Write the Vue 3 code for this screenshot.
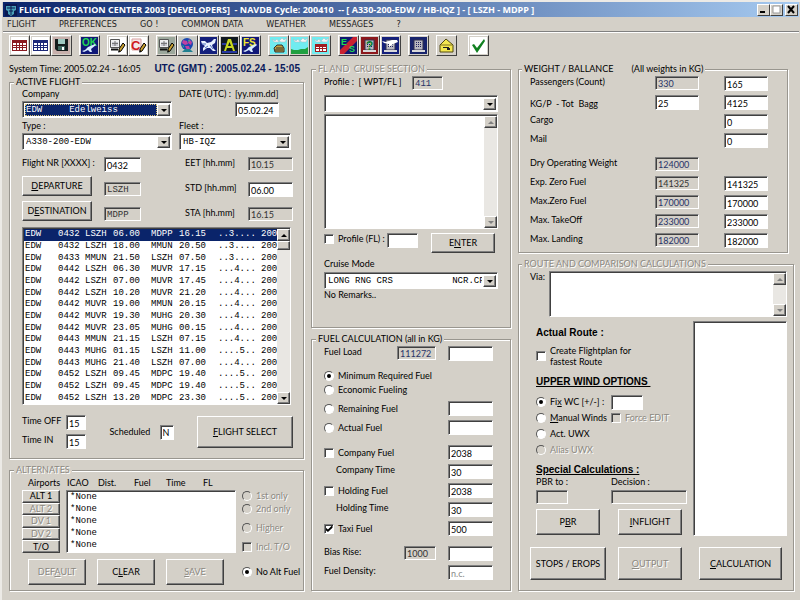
<script setup>
import { reactive } from 'vue'

const menus = ['FLIGHT', 'PREFERENCES', 'GO !', 'COMMON DATA', 'WEATHER', 'MESSAGES', '?']

const table = (c) => `<rect width="17" height="17" fill="#fff"/><rect x="1" y="3" width="15" height="11" fill="${c}"/><path d="M2 6h3v2H2zM6 6h2v2H6zM9 6h2v2H9zM12 6h3v2h-3zM2 9h3v1H2zM6 9h2v1H6zM9 9h2v1H9zM12 9h3v1h-3zM2 11h3v2H2zM6 11h2v2H6zM9 11h2v2H9zM12 11h3v2h-3z" fill="#fff"/>`
const pencil = '<path d="M14 6l2 2-4 6-2 1 0-3z" fill="#c8a030" stroke="#000" stroke-width="1"/><path d="M9 16l1-3 1 1z" fill="#000"/>'
const page = '<path d="M1.500 2.500h9v8h-9z" fill="#f0f0f0" stroke="#555"/><path d="M3 5h6v4H3z" fill="#c8c8d0"/><path d="M6 4v5M3 6.500h6" stroke="#777"/><path d="M2 12.500h7" stroke="#111" stroke-width="2"/>'
const tower = '<path d="M4 3h9v10H4z" fill="#b8b8c0" stroke="#303050"/><path d="M6 5h1v1H6zM8 5h1v1H8zM10 5h1v1h-1zM6 7h1v1H6zM8 7h1v1H8zM10 7h1v1h-1zM6 9h1v1H6zM8 9h1v1H8zM10 9h1v1h-1z" fill="#202060"/><path d="M2 13h13v2H2z" fill="#d8d8d8"/>'
const plane = '<path d="M1 14l3-1 3-3 7-3 1 1-5 4 1 3-2 0-2-2-4 2z" fill="#d8ecff"/>'
const clouds = '<path d="M2 2l3 2 2-2 2 3H4zM9 4l3-3 2 2 3-2-2 4h-4z" fill="#f4f4f4" stroke="#a8b8c0" stroke-width=".5"/>'
const lettering = (t, x, y, s, c) => `<text x="${x}" y="${y}" font-family="Liberation Sans, sans-serif" font-weight="bold" font-size="${s}" fill="${c}">${t}</text>`
const fill = (c) => `<rect width="17" height="17" fill="${c}"/>`

const toolGroups = [
  [
    { name: 'Red table', art: table('#8a1a20') },
    { name: 'Blue table', art: table('#1c2878') },
    { name: 'Save', art: fill('#c8b0ac') + '<path d="M2 2h13v12H4l-2-2z" fill="#141c1c"/><path d="M5 2h7v5H5z" fill="#9fc8c0"/><path d="M5 9h7v4H5z" fill="#406860"/><path d="M9 10h2v3H9z" fill="#fff"/>' },
  ],
  [{ name: 'OK', art: fill('#101878') + lettering('OK', 1, 9, 10, '#20d850') + plane }],
  [
    { name: 'Edit page', art: fill('#fff') + page + pencil },
    { name: 'Edit company', art: fill('#fff') + '<path d="M2 2h9v11H2z" fill="#f4e8e8" stroke="#d8a0a0"/>' + lettering('C', 1, 13, 13, '#d01820') + pencil },
  ],
  [
    { name: 'Edit flight', art: fill('#9ca89c') + page + pencil },
    { name: 'World', art: fill('#c4c8c4') + '<circle cx="8" cy="7" r="6" fill="#1848b0"/><path d="M4 3l4 1 1 3-3 1-3-2zM10 2l3 3-1 3-3-2zM6 9l4 0 1 3-3 1z" fill="#c040a0"/><path d="M3 8l2 1 0 2zM9 3l2 0-1 2z" fill="#30c080"/><path d="M3 15l3-3h5l3 3z" fill="#208090"/>' },
    { name: 'Aircraft', art: fill('#14207c') + '<path d="M1 4h4l2 2 4-1 3-3 2 0-1 4-3 2 1 3 3 3h-3l-3-3-3 0-4 3 0-3 2-2-3-2z" fill="#e8f0ff"/><path d="M2 7h4M10 8l3 4M5 11l3-2" stroke="#5070c0" fill="none"/>' },
    { name: 'Airports', art: fill('#101820') + '<path d="M3 14L7 2h3l4 12h-2l-1-3H6l-1 3zM7 9h3L8.500 5z" fill="#c8d820"/><path d="M1 7h4M12 7h4M1 15h15" stroke="#2838a0" stroke-width="2"/>' },
    { name: 'Flight schedule', art: fill('#101878') + lettering('FS', 1, 9, 10, '#f0e830') + plane },
  ],
  [
    { name: 'Airport weather', art: fill('#70ecf0') + clouds + '<path d="M4 11l3-3h5l2 3v4H5z" fill="#c0a040" stroke="#303030"/><path d="M6 11h7M5 13h8" stroke="#303030"/>' },
    { name: 'Area weather', art: fill('#70ecf0') + clouds + '<path d="M0 12l3 1 4 0 3-1 4 0 3-2v7H0z" fill="#20a040"/>' },
    { name: 'Weather table', art: fill('#70ecf0') + clouds + '<path d="M3 7h12v8H3z" fill="#a01c20"/><path d="M4 10h3v1H4zM8 10h2v1H8zM11 10h3v1h-3zM4 12h3v2H4zM8 12h2v2H8zM11 12h3v2h-3z" fill="#fff"/>' },
  ],
  [
    { name: 'Messages ES', art: fill('#101870') + '<path d="M13 0h4v4L4 17H0v-4z" fill="#c82030"/>' + lettering('E', 1, 8, 9, '#20d850') + lettering('S', 9, 15, 9, '#20d850') },
    { name: 'Request', art: fill('#8c181c') + tower + lettering('?', 5, 13, 12, '#108030') },
    { name: 'Departure message', art: fill('#14207c') + tower + '<path d="M0 4l4 1 6-2 5 0 1 2-5 2-4 3 0-3-5-1z" fill="#fff"/>' },
  ],
  [{ name: 'Company message', art: fill('#18246c') + tower }],
  [{ name: 'Mail', art: fill('#d4d0c8') + '<path d="M2 8l6-6 7 6v7H2z" fill="#f4e850" stroke="#504810"/><path d="M3 8h11" stroke="#807020"/><path d="M5 10h6v1H5zM9 11h3v2H9z" fill="#202020"/>' }],
  [{ name: 'Confirm', art: fill('#fff') + '<path d="M2 8l2-1 3 4 7-9 1 2-8 12z" fill="#108020"/>' }],
]

const flights = [
  ['EDW', '0432', 'LSZH', '06.00', 'MDPP', '16.15', '..3....', '200'],
  ['EDW', '0432', 'LSZH', '18.00', 'MMUN', '20.50', '..3....', '200'],
  ['EDW', '0433', 'MMUN', '21.50', 'LSZH', '07.50', '..3....', '200'],
  ['EDW', '0442', 'LSZH', '06.30', 'MUVR', '17.15', '...4...', '200'],
  ['EDW', '0442', 'LSZH', '07.00', 'MUVR', '17.45', '...4...', '200'],
  ['EDW', '0442', 'LSZH', '10.20', 'MUVR', '21.20', '...4...', '200'],
  ['EDW', '0442', 'MUVR', '19.00', 'MMUN', '20.15', '...4...', '200'],
  ['EDW', '0442', 'MUVR', '19.30', 'MUHG', '20.30', '...4...', '200'],
  ['EDW', '0442', 'MUVR', '23.05', 'MUHG', '00.15', '...4...', '200'],
  ['EDW', '0443', 'MMUN', '21.15', 'LSZH', '07.15', '...4...', '200'],
  ['EDW', '0443', 'MUHG', '01.15', 'LSZH', '11.00', '....5..', '200'],
  ['EDW', '0443', 'MUHG', '21.40', 'LSZH', '07.00', '...4...', '200'],
  ['EDW', '0452', 'LSZH', '09.45', 'MDPC', '19.40', '....5..', '200'],
  ['EDW', '0452', 'LSZH', '09.45', 'MDPC', '19.40', '....5..', '200'],
  ['EDW', '0452', 'LSZH', '13.20', 'MDPC', '23.30', '....5..', '200'],
]

const pad = (a, n, b) => a + '\u00a0'.repeat(n) + b
const company = pad('EDW', 5, 'Edelweiss')
const cruise = pad('LONG RNG CRS', 11, 'NCR.CR')

const altButtons = [
  { text: 'ALT 1', on: true },
  { text: 'ALT 2', on: false },
  { text: 'DV 1', on: false },
  { text: 'DV 2', on: false },
  { text: 'T/O', on: true },
]

const fuel = reactive([
  { id: 'rem', type: 'radio', text: 'Remaining Fuel', value: '' },
  { id: 'act', type: 'radio', text: 'Actual Fuel', value: '' },
  { id: 'cof', type: 'checkbox', text: 'Company Fuel', value: '2038', first: true },
  { id: 'cot', text: 'Company Time', value: '30' },
  { id: 'hof', type: 'checkbox', text: 'Holding Fuel', value: '2038' },
  { id: 'hot', text: 'Holding Time', value: '30' },
  { id: 'tax', type: 'checkbox', text: 'Taxi Fuel', value: '500', checked: true },
])

const weights = reactive([
  { id: 'pax', text: 'Passengers (Count)', calc: '330', value: '165' },
  { id: 'bag', text: 'KG/P  - Tot  Bagg', edit: '25', value: '4125', low: true },
  { id: 'cargo', text: 'Cargo', value: '0' },
  { id: 'mail', text: 'Mail', value: '0' },
  { id: 'dow', text: 'Dry Operating Weight', calc: '124000', first: true },
  { id: 'ezf', text: 'Exp. Zero Fuel', calc: '141325', value: '141325', dark: true },
  { id: 'mzf', text: 'Max.Zero Fuel', calc: '170000', value: '170000' },
  { id: 'mto', text: 'Max. TakeOff', calc: '233000', value: '233000' },
  { id: 'mla', text: 'Max. Landing', calc: '182000', value: '182000' },
])
</script>

<template>
  <div class="window">
    <header class="titlebar">
      <svg class="app-icon" viewBox="0 0 12 12" aria-hidden="true">
        <rect width="12" height="12" fill="#0a1850" />
        <path d="M1 2h10v4L9 7v3L6 12 3 10V7L1 6z" fill="#48a0b8" />
        <path d="M2 4h8M6 2v9M4 7h4" stroke="#0a1850" />
      </svg>
      <h1>FLIGHT OPERATION CENTER 2003 [DEVELOPERS]&nbsp; - NAVDB Cycle: 200410&nbsp; -- [ A330-200-EDW / HB-IQZ ] - [ LSZH - MDPP ]</h1>
      <div class="window-buttons">
        <button aria-label="Minimize"><svg viewBox="0 0 10 9"><path d="M2 6h5v2H2z" /></svg></button>
        <button aria-label="Maximize" disabled><svg viewBox="0 0 10 9"><path d="M2 1h7v7H2z" fill="#fff" stroke="#999" /></svg></button>
        <button class="close" aria-label="Close"><svg viewBox="0 0 10 9"><path d="M2 1l6 7M8 1L2 8" stroke="#000" stroke-width="2" /></svg></button>
      </div>
    </header>

    <nav class="menu">
      <a v-for="m in menus" :key="m" href="#">{{ m }}</a>
    </nav>

    <div class="toolbar">
      <div v-for="(group, i) in toolGroups" :key="i" class="tool-group">
        <button v-for="t in group" :key="t.name" class="tool" :aria-label="t.name">
          <svg viewBox="0 0 17 17" v-html="t.art" />
        </button>
      </div>
    </div>

    <main class="content">
      <div class="column">
        <section>
          <p class="status">
            <span>System Time: 2005.02.24 - 16:05</span>
            <strong>UTC (GMT) : 2005.02.24 - 15:05</strong>
          </p>
          <fieldset class="active">
            <legend>ACTIVE FLIGHT</legend>
            <div class="pair">
              <div class="stack">
                <label for="company">Company</label>
                <span class="combo focused">
                  <select id="company"><option>{{ company }}</option></select><i class="arrow down"></i>
                </span>
              </div>
              <div class="date">
                <label for="date">DATE (UTC) :</label>
                <span>[yy.mm.dd]</span>
                <input id="date" class="field" value="05.02.24" />
              </div>
              <div class="stack">
                <label for="type">Type :</label>
                <span class="combo">
                  <select id="type"><option>A330-200-EDW</option></select><i class="arrow down"></i>
                </span>
              </div>
              <div class="stack fleet">
                <label for="fleet">Fleet :</label>
                <span class="combo">
                  <select id="fleet"><option>HB-IQZ</option></select><i class="arrow down"></i>
                </span>
              </div>
            </div>

            <div class="flight">
              <label for="nr">Flight NR [XXXX] :</label>
              <input id="nr" class="field" value="0432" />
              <label for="eet" class="time">EET [hh.mm]</label>
              <input id="eet" class="field calc dark" value="10.15" readonly />
              <button class="push lift"><u>D</u>EPARTURE</button>
              <input class="field calc dark mono" aria-label="Departure airport" value="LSZH" readonly />
              <label for="std" class="time">STD [hh.mm]</label>
              <input id="std" class="field" value="06.00" />
              <button class="push lift">D<u>E</u>STINATION</button>
              <input class="field calc dark mono" aria-label="Destination airport" value="MDPP" readonly />
              <label for="sta" class="time">STA [hh.mm]</label>
              <input id="sta" class="field calc dark" value="16.15" readonly />
            </div>

            <div class="sunken list">
              <ul role="listbox" aria-label="Flights">
                <li v-for="(f, i) in flights" :key="i" role="option" :aria-selected="i === 0" :class="{ selected: i === 0 }">
                  <span v-for="(cell, j) in f" :key="j">{{ cell }}</span>
                </li>
              </ul>
              <div class="scroll"><i class="arrow up"></i><i class="thumb"></i><i class="arrow down"></i></div>
            </div>

            <div class="select-row">
              <div class="times">
                <label for="off">Time OFF</label><input id="off" class="field" value="15" />
                <label for="in">Time IN</label><input id="in" class="field" value="15" />
              </div>
              <div class="sched">
                <label for="sch">Scheduled</label><input id="sch" class="field" value="N" />
              </div>
              <button class="push"><u>F</u>LIGHT SELECT</button>
            </div>
          </fieldset>
        </section>

        <fieldset class="alternates last">
          <legend class="dim">ALTERNATES</legend>
          <div class="alt-head">
            <span>Airports</span><span>ICAO</span><span>Dist.</span><span>Fuel</span><span>Time</span><span>FL</span>
          </div>
          <div class="alt-grid">
            <div class="alt-buttons">
              <button v-for="b in altButtons" :key="b.text" class="push" :disabled="!b.on">{{ b.text }}</button>
            </div>
            <ul class="sunken alt-list" role="listbox" aria-label="Alternates">
              <li v-for="n in 5" :key="n" role="option">*None</li>
            </ul>
            <div class="alt-options">
              <label class="choice dim"><input type="radio" name="alt" disabled />1st only</label>
              <label class="choice dim"><input type="radio" name="alt" disabled />2nd only</label>
              <label class="choice dim spaced"><input type="radio" name="alt" disabled />Higher</label>
              <label class="choice dim spaced"><input type="checkbox" disabled />Incl. T/O</label>
            </div>
            <div class="alt-actions">
              <button class="push" disabled>DEF<u>A</u>ULT</button>
              <button class="push">C<u>L</u>EAR</button>
              <button class="push" disabled><u>S</u>AVE</button>
            </div>
            <label class="choice"><input type="radio" name="alt" checked />No Alt Fuel</label>
          </div>
        </fieldset>
      </div>

      <div class="column">
        <fieldset class="cruise">
          <legend class="dim">FL AND&nbsp; CRUISE SECTION</legend>
          <div class="profile">
            <label for="wpt">Profile :&nbsp; [ WPT/FL ]</label>
            <input id="wpt" class="field calc mono" value="411" readonly />
          </div>
          <span class="combo">
            <select aria-label="Waypoint profile"><option></option></select><i class="arrow down"></i>
          </span>
          <div class="sunken memo">
            <textarea aria-label="Profile entries"></textarea>
            <div class="scroll off"><i class="arrow up"></i><i class="arrow down"></i></div>
          </div>
          <div class="enter-row">
            <label class="choice"><input type="checkbox" />Profile (FL) :</label>
            <input class="field" aria-label="Profile flight level" />
            <button class="push">E<u>N</u>TER</button>
          </div>
          <label for="mode" class="mode">Cruise Mode</label>
          <span class="combo">
            <select id="mode"><option>{{ cruise }}</option></select><i class="arrow down"></i>
          </span>
          <p>No Remarks..</p>
        </fieldset>

        <fieldset class="fuel last">
          <legend>FUEL CALCULATION (all in KG)</legend>
          <div class="fuel-row">
            <label for="load">Fuel Load</label>
            <input id="load" class="field calc" value="111272" readonly />
            <input class="field" aria-label="Fuel load entry" />
          </div>
          <div class="modes">
            <label class="choice"><input type="radio" name="fuel" checked />Minimum Required Fuel</label>
            <label class="choice"><input type="radio" name="fuel" />Economic Fueling</label>
          </div>
          <div v-for="f in fuel" :key="f.id" class="fuel-row" :class="{ first: f.first }">
            <label v-if="f.type" class="choice wide"><input :type="f.type" :name="f.type === 'radio' ? 'fuel' : f.id" :checked="f.checked" />{{ f.text }}</label>
            <label v-else class="wide indent" :for="f.id">{{ f.text }}</label>
            <input :id="f.id" v-model="f.value" class="field" :aria-label="f.text" />
          </div>
          <div class="fuel-row first">
            <label for="bias">Bias Rise:</label>
            <input id="bias" class="field calc dark short" value="1000" readonly />
            <input class="field" aria-label="Bias rise entry" />
          </div>
          <div class="fuel-row">
            <label for="density" class="wide">Fuel Density:</label>
            <input id="density" class="field faint" value="n.c." />
          </div>
        </fieldset>
      </div>

      <div class="column">
        <fieldset class="weight">
          <legend><span>WEIGHT / BALLANCE</span><span>(All weights in KG)</span></legend>
          <div v-for="w in weights" :key="w.id" class="weight-row" :class="{ first: w.first, low: w.low }">
            <label :for="w.id">{{ w.text }}</label>
            <input v-if="w.calc" :id="w.value ? null : w.id" class="field calc" :class="{ dark: w.dark }" :value="w.calc" :aria-label="w.text + ' limit'" readonly />
            <input v-else-if="w.edit" v-model="w.edit" class="field" aria-label="KG per passenger" />
            <span v-else></span>
            <input v-if="w.value !== undefined" :id="w.id" v-model="w.value" class="field" />
          </div>
        </fieldset>

        <fieldset class="route last">
          <legend class="dim">ROUTE AND COMPARISON CALCULATIONS</legend>
          <div class="via">
            <label for="via">Via:</label>
            <div class="sunken memo">
              <textarea id="via"></textarea>
              <div class="scroll off"><i class="arrow up"></i><i class="arrow down"></i></div>
            </div>
          </div>
          <div class="route-grid">
            <div class="options">
              <h2>Actual Route :</h2>
              <label class="choice fastest"><input type="checkbox" /><span>Create Flightplan for<br />fastest Route</span></label>
              <h2 class="under">UPPER WIND OPTIONS&nbsp;</h2>
              <div class="wind">
                <label class="choice"><input type="radio" name="wind" checked /><span>Fi<u>x</u> WC [+/-] :</span></label>
                <input class="field" aria-label="Wind component" />
                <label class="choice"><input type="radio" name="wind" /><span><u>M</u>anual Winds</span></label>
                <label class="choice dim"><input type="checkbox" disabled />Force EDIT</label>
                <label class="choice"><input type="radio" name="wind" />Act. UWX</label>
                <span></span>
                <label class="choice dim"><input type="radio" name="wind" disabled />Alias UWX</label>
              </div>
              <h2 class="under">Special Calculations :</h2>
              <div class="special-grid">
                <label for="pbr">PBR to :</label>
                <label for="decision">Decision :</label>
                <input id="pbr" class="field calc narrow" readonly />
                <input id="decision" class="field calc" readonly />
              </div>
              <div class="special-actions">
                <button class="push">P<u>B</u>R</button>
                <button class="push"><u>I</u>NFLIGHT</button>
              </div>
            </div>
            <div class="sunken result"></div>
          </div>
          <div class="route-actions">
            <button class="push stops">STOPS / EROPS</button>
            <button class="push output" disabled><u>O</u>UTPUT</button>
            <button class="push"><u>C</u>ALCULATION</button>
          </div>
        </fieldset>
      </div>
    </main>
  </div>
</template>

<style>
body {
  background: #d4d0c8;
}
</style>

<style scoped>
.window {
  --face: #d4d0c8;
  --dark: #808080;
  --edge: #404040;
  min-height: 100vh;
  box-sizing: border-box;
  padding: 2px 1px 0 3px;
  box-shadow: inset 2px 2px #eceae6;
  background: var(--face);
  color: #000;
  font: 9px/12px Lato, "Liberation Sans", sans-serif;
}
.window *,
.window *::before {
  box-sizing: border-box;
}
p, h1, h2, ul {
  margin: 0;
  padding: 0;
  list-style: none;
}
button, input, select, textarea {
  font: inherit;
  color: inherit;
  margin: 0;
  border-radius: 0;
  outline: none;
}
label, legend, span {
  white-space: pre;
}

/* Title bar, menu and toolbar */
.titlebar {
  display: flex;
  align-items: center;
  height: 15px;
  padding: 0 1px 0 2px;
  background: linear-gradient(90deg, #0a246a, #a6caf0);
  color: #fff;
}
.app-icon {
  width: 12px;
  height: 12px;
}
h1 {
  flex: 1;
  padding-left: 2px;
  font: bold 9px/14px "Open Sans", "DejaVu Sans", sans-serif;
  white-space: nowrap;
  overflow: hidden;
}
.window-buttons {
  display: flex;
}
.window-buttons button {
  display: flex;
  width: 13px;
  height: 12px;
  padding: 0;
  background: var(--face);
  border: 1px solid;
  border-color: #fff var(--edge) var(--edge) #fff;
}
.window-buttons .close {
  margin-left: 2px;
}
.window-buttons svg {
  width: 10px;
  height: 9px;
}
.menu {
  display: flex;
  gap: 23px;
  padding: 1px 4px;
  border-bottom: 1px solid var(--dark);
  box-shadow: 0 1px #fff;
  font: 9px/12px "DejaVu Sans Condensed", "DejaVu Sans", sans-serif;
}
.menu a {
  color: #222;
  text-decoration: none;
}
.toolbar {
  display: flex;
  gap: 7px;
  padding: 3px 6px 0;
}
.tool-group {
  display: flex;
}
.tool-group:last-child {
  margin-left: 4px;
}
.tool {
  display: flex;
  width: 21px;
  height: 21px;
  padding: 1px;
  background: var(--face);
  border: 1px solid;
  border-color: #fff var(--edge) var(--edge) #fff;
}
.tool svg {
  width: 17px;
  height: 17px;
}

/* Page frame */
.content {
  display: grid;
  grid-template-columns: 295fr 200fr 276fr;
  gap: 7px;
  padding: 7px 5px 8px 6px;
}
.column {
  display: flex;
  flex-direction: column;
  gap: 5px;
  min-width: 0;
}
.last {
  flex: 1;
}
fieldset {
  margin: 0;
  min-width: 0;
  padding: 0 12px;
  border: 1px solid #99968f;
  box-shadow: inset 1px 1px #fff, 1px 1px #fff;
}
legend {
  margin-left: -8px;
  padding: 0 2px;
  background: var(--face);
}
.dim,
.push:disabled {
  color: #8c8982;
  text-shadow: 1px 1px #fff;
}
.status {
  display: flex;
  justify-content: space-between;
  padding-right: 4px;
  margin-bottom: 1px;
  white-space: nowrap;
}
.status strong,
h2 {
  font: bold 10px/12px "Liberation Sans", sans-serif;
}
.status strong {
  color: #0a1a5c;
}

/* Controls */
.field {
  width: 100%;
  min-width: 0;
  height: 15px;
  padding: 1px 0 0 2px;
  background: #fff;
  border: 1px solid;
  border-color: var(--dark) #fff #fff var(--dark);
  box-shadow: inset 1px 1px var(--edge);
}
.calc {
  height: 14px;
  background: var(--face);
  color: #283468;
}
.dark {
  color: #333;
}
.faint {
  color: #888;
}
.mono {
  font: 9px/12px "Liberation Mono", monospace;
}
.push {
  padding: 0;
  background: var(--face);
  border: 1px solid;
  border-color: #fff var(--edge) var(--edge) #fff;
  box-shadow: inset -1px -1px var(--dark);
  text-align: center;
  white-space: nowrap;
}
.sunken {
  background: #fff;
  border: 1px solid;
  border-color: var(--dark) #fff #fff var(--dark);
  box-shadow: inset 1px 1px var(--edge);
}
.combo {
  display: grid;
  grid-template-columns: 1fr 13px;
  height: 17px;
  padding: 2px 1px 1px 2px;
  background: #fff;
  border: 1px solid;
  border-color: var(--dark) #fff #fff var(--dark);
  box-shadow: inset 1px 1px var(--edge);
}
.combo select {
  min-width: 0;
  appearance: none;
  padding: 0 1px;
  border: 0;
  background: transparent;
  font: 9px/12px "Liberation Mono", monospace;
  white-space: pre;
  overflow: hidden;
}
.focused select {
  background: #0a246a;
  color: #fff;
  outline: 1px dotted #d8c070;
  outline-offset: -1px;
}
.arrow,
.thumb {
  display: flex;
  align-items: center;
  justify-content: center;
  min-height: 12px;
  background: var(--face);
  border: 1px solid;
  border-color: #fff var(--edge) var(--edge) #fff;
  box-shadow: inset -1px -1px var(--dark);
  pointer-events: none;
}
.arrow::before {
  content: "";
  border: 3px solid transparent;
}
.down::before {
  border-top-color: #000;
  border-bottom-width: 0;
}
.up::before {
  border-bottom-color: #000;
  border-top-width: 0;
}
.scroll {
  display: flex;
  flex-direction: column;
  width: 13px;
  background: #e9e7e3;
}
.scroll .down {
  margin-top: auto;
}
.scroll .thumb {
  min-height: 9px;
}
.off .down::before {
  border-top-color: var(--dark);
}
.off .up::before {
  border-bottom-color: var(--dark);
}
.memo {
  display: flex;
  padding: 1px 0 0 1px;
}
.memo textarea {
  flex: 1;
  min-width: 0;
  height: 100%;
  padding: 1px;
  border: 0;
  resize: none;
  background: transparent;
}
.choice {
  display: flex;
  align-items: center;
  gap: 4px;
}
.choice input {
  appearance: none;
  flex: none;
  display: grid;
  place-items: center;
  width: 10px;
  height: 10px;
  background: #fff;
  border: 1px solid;
  border-color: var(--dark) #fff #fff var(--dark);
  box-shadow: inset 1px 1px var(--edge);
}
.choice input[type="radio"] {
  border-radius: 50%;
  border-color: #555 #fff #fff #555;
  box-shadow: none;
}
.choice input:disabled {
  background: var(--face);
}
.choice input:checked::before {
  content: "";
  width: 4px;
  height: 4px;
  border-radius: 50%;
  background: #000;
}
.choice input[type="checkbox"]:checked::before {
  width: 7px;
  height: 7px;
  border-radius: 0;
  clip-path: polygon(0 35%, 35% 65%, 100% 0, 100% 38%, 35% 100%, 0 70%);
}

/* Active flight */
.active {
  padding: 0 10px 9px 12px;
}
.pair {
  display: grid;
  grid-template-columns: 150fr 114fr;
  gap: 2px 7px;
}
.stack {
  display: grid;
  gap: 1px;
}
.fleet {
  margin-right: 2px;
}
.date {
  display: grid;
  grid-template-columns: 56px 44px;
  row-gap: 1px;
}
.date input {
  grid-column: 2;
}
.flight {
  display: grid;
  grid-template-columns: 82px 37px 1fr 63px 45px;
  grid-template-rows: 25px 25px 20px;
  align-items: start;
  margin-top: 7px;
}
.time {
  grid-column: 4;
}
.lift {
  width: 70px;
  height: 20px;
  margin-top: -6px;
}
.list {
  display: flex;
  height: 178px;
  margin-right: 2px;
  padding: 1px 0 0 1px;
}
.list ul {
  flex: 1;
  min-width: 0;
  display: flex;
  flex-direction: column;
}
.list li {
  flex: 1;
  min-height: 0;
  display: grid;
  grid-template-columns: 33px 27px 28px 38px 28px 39px 43px 1fr;
  align-items: center;
  padding-left: 1px;
  overflow: hidden;
  font: 9px/11px "Liberation Mono", monospace;
}
.selected {
  background: #0a246a;
  color: #fff;
}
.select-row {
  display: flex;
  justify-content: space-between;
  align-items: center;
  margin-top: 10px;
}
.times {
  display: grid;
  grid-template-columns: 44px 20px;
  gap: 4px 0;
}
.sched {
  display: grid;
  grid-template-columns: 50px 14px;
  align-items: center;
}
.select-row .push {
  width: 96px;
  height: 32px;
}

/* Alternates */
.alternates {
  padding: 1px 2px 4px 12px;
}
.alt-head {
  display: grid;
  grid-template-columns: 39px 31px 36px 32px 37px 1fr;
  padding-left: 6px;
}
.alt-grid {
  display: grid;
  grid-template-columns: 38px 1fr 59px;
  grid-template-rows: 63px auto;
  gap: 6px;
  margin-top: 1px;
}
.alt-buttons {
  display: grid;
  grid-auto-rows: 1fr;
}
.alt-buttons .push {
  min-height: 0;
  line-height: 10px;
}
.alt-list {
  padding: 0 3px;
  font: 9px/12px "Liberation Mono", monospace;
}
.alt-options .choice + .choice {
  margin-top: 1px;
}
.alt-options .choice.spaced {
  margin-top: 7px;
}
.alt-actions {
  grid-column: 1 / 3;
  display: flex;
  gap: 11px;
  padding-left: 6px;
}
.alt-actions .push {
  width: 58px;
  height: 26px;
}

/* Cruise section */
.cruise {
  padding-bottom: 26px;
}
.profile {
  display: grid;
  grid-template-columns: 88px 31px;
  padding-top: 1px;
  margin-bottom: 5px;
}
.cruise .memo {
  height: 115px;
  margin: 2px 0 4px;
}
.enter-row {
  display: flex;
  align-items: start;
  gap: 4px;
}
.enter-row .choice {
  width: 59px;
}
.enter-row .field {
  width: 31px;
}
.enter-row .push {
  width: 64px;
  height: 20px;
  margin-left: 9px;
}
.mode {
  display: block;
  margin: 5px 0 2px;
}

/* Fuel calculation */
.fuel-row {
  display: grid;
  grid-template-columns: 1fr 39px 45px;
  column-gap: 12px;
  margin-top: 4px;
  padding-right: 5px;
}
legend + .fuel-row {
  margin-top: 1px;
}
.fuel-row.first {
  margin-top: 10px;
}
.wide {
  grid-column: 1 / 3;
}
.indent {
  padding-left: 12px;
}
.short {
  width: 32px;
  justify-self: end;
}
.modes {
  display: grid;
  gap: 2px;
  margin: 9px 0 5px;
}

/* Weight and balance */
.weight {
  margin-right: 6px;
  padding: 0 19px 4px 11px;
}
.weight legend span + span {
  padding-left: 18px;
}
.weight-row {
  display: grid;
  grid-template-columns: 1fr 44px 44px;
  column-gap: 25px;
  height: 15px;
  margin-top: 4px;
}
legend + .weight-row {
  margin-top: 1px;
}
.weight-row.first {
  margin-top: 9px;
}
.weight-row.low label {
  align-self: end;
}

/* Route and comparison */
.route {
  padding: 1px 6px 10px 11px;
}
.via {
  display: grid;
  grid-template-columns: 19px 1fr;
}
.via .memo {
  height: 46px;
}
.route-grid {
  display: grid;
  grid-template-columns: 1fr 94px;
  gap: 6px;
  margin-top: 4px;
}
.options {
  padding: 6px 0 1px 6px;
}
.under {
  text-decoration: underline;
}
.fastest {
  margin: 6px 0 9px;
  line-height: 11px;
}
.wind {
  display: grid;
  grid-template-columns: 75px 1fr;
  grid-auto-rows: 16px;
  align-items: center;
  margin: 6px 0;
}
.wind .field {
  width: 32px;
}
.special-grid {
  display: grid;
  grid-template-columns: 75px 1fr;
  row-gap: 2px;
}
.narrow {
  width: 32px;
}
.special-actions {
  display: flex;
  gap: 18px;
  margin-top: 5px;
}
.special-actions .push {
  width: 64px;
  height: 26px;
}
.route-actions {
  display: grid;
  grid-template-columns: 88px 81px 83px;
  margin-top: 11px;
}
.route-actions .push {
  height: 33px;
}
.stops {
  width: 76px;
}
.output {
  width: 64px;
}
</style>
